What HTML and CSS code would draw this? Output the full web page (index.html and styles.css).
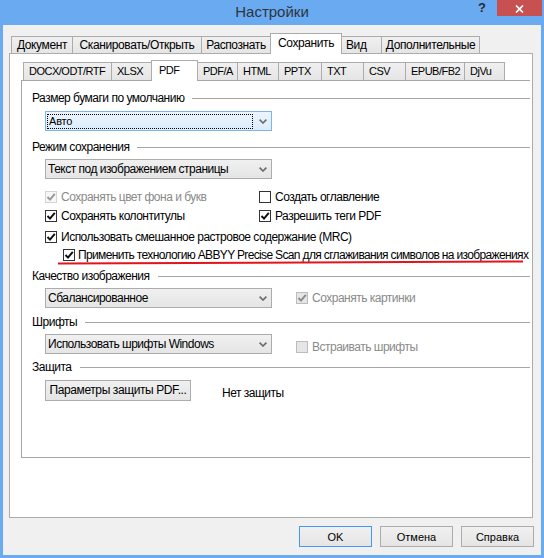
FILE: index.html
```html
<!DOCTYPE html>
<html lang="ru">
<head>
<meta charset="utf-8">
<title>Настройки</title>
<link rel="stylesheet" href="styles.css">
</head>
<body>
<div class="window">
  <header class="titlebar">
    <div class="title">Настройки</div>
    <div class="controls">
      <span class="help">?</span>
      <span class="close"><svg width="9" height="8" viewBox="0 0 9 8"><path d="M1 0.5 L8 7.5 M8 0.5 L1 7.5" stroke="#fff" stroke-width="1.7" fill="none"/></svg></span>
    </div>
  </header>
  <div class="client">
    <div class="tabrow outer">
      <div class="tab t-doc">Документ</div>
      <div class="tab t-scan">Сканировать/Открыть</div>
      <div class="tab t-rec">Распознать</div>
      <div class="tab t-save selected">Сохранить</div>
      <div class="tab t-view">Вид</div>
      <div class="tab t-adv">Дополнительные</div>
    </div>
    <div class="pane outer-pane">
      <div class="tabrow inner">
        <div class="itab i-docx">DOCX/ODT/RTF</div>
        <div class="itab i-xlsx">XLSX</div>
        <div class="itab i-pdf selected">PDF</div>
        <div class="itab i-pdfa">PDF/A</div>
        <div class="itab i-html">HTML</div>
        <div class="itab i-pptx">PPTX</div>
        <div class="itab i-txt">TXT</div>
        <div class="itab i-csv">CSV</div>
        <div class="itab i-epub">EPUB/FB2</div>
        <div class="itab i-djvu">DjVu</div>
      </div>
      <div class="pane inner-pane">
        <div class="group g1"><span>Размер бумаги по умолчанию</span><i class="rule"></i></div>
        <div class="row r-combo1">
          <div class="combo combo-focus">
            <span class="focus-rect">Авто</span>
            <svg class="chev" width="8" height="5" viewBox="0 0 8 5"><path d="M0.6 0.6 L4 4 L7.4 0.6" stroke="#6a6a6a" stroke-width="1.6" fill="none"/></svg>
          </div>
        </div>

        <div class="group g2"><span>Режим сохранения</span><i class="rule"></i></div>
        <div class="row r-combo2">
          <div class="combo">
            <span>Текст под изображением страницы</span>
            <svg class="chev" width="8" height="5" viewBox="0 0 8 5"><path d="M0.6 0.6 L4 4 L7.4 0.6" stroke="#6a6a6a" stroke-width="1.6" fill="none"/></svg>
          </div>
        </div>

        <div class="checks">
          <label class="check c1 disabled"><span class="box"><svg width="10" height="10" viewBox="0 0 10 10"><path d="M1.5 5 L4 7.6 L8.8 1.8" stroke="#9a9a9a" stroke-width="2" fill="none"/></svg></span>Сохранять цвет фона и букв</label>
          <label class="check c1b"><span class="box"></span>Создать оглавление</label>
          <label class="check c2"><span class="box"><svg width="10" height="10" viewBox="0 0 10 10"><path d="M1.5 5 L4 7.6 L8.8 1.8" stroke="#111" stroke-width="2" fill="none"/></svg></span>Сохранять колонтитулы</label>
          <label class="check c2b"><span class="box"><svg width="10" height="10" viewBox="0 0 10 10"><path d="M1.5 5 L4 7.6 L8.8 1.8" stroke="#111" stroke-width="2" fill="none"/></svg></span>Разрешить теги PDF</label>
          <label class="check c3 wide"><span class="box"><svg width="10" height="10" viewBox="0 0 10 10"><path d="M1.5 5 L4 7.6 L8.8 1.8" stroke="#111" stroke-width="2" fill="none"/></svg></span>Использовать смешанное растровое содержание (MRC)</label>
          <label class="check c4 wide indent"><span class="box"><svg width="10" height="10" viewBox="0 0 10 10"><path d="M1.5 5 L4 7.6 L8.8 1.8" stroke="#111" stroke-width="2" fill="none"/></svg></span>Применить технологию ABBYY Precise Scan для сглаживания символов на изображениях</label>
        </div>

        <div class="group g3"><span>Качество изображения</span><i class="rule"></i></div>
        <div class="row r-combo3">
          <div class="combo">
            <span>Сбалансированное</span>
            <svg class="chev" width="8" height="5" viewBox="0 0 8 5"><path d="M0.6 0.6 L4 4 L7.4 0.6" stroke="#6a6a6a" stroke-width="1.6" fill="none"/></svg>
          </div>
          <label class="check side disabled gray-box"><span class="box"><svg width="10" height="10" viewBox="0 0 10 10"><path d="M1.5 5 L4 7.6 L8.8 1.8" stroke="#8c8c8c" stroke-width="2" fill="none"/></svg></span>Сохранять картинки</label>
        </div>

        <div class="group g4"><span>Шрифты</span><i class="rule"></i></div>
        <div class="row r-combo4">
          <div class="combo">
            <span>Использовать шрифты Windows</span>
            <svg class="chev" width="8" height="5" viewBox="0 0 8 5"><path d="M0.6 0.6 L4 4 L7.4 0.6" stroke="#6a6a6a" stroke-width="1.6" fill="none"/></svg>
          </div>
          <label class="check side side-low disabled gray-box"><span class="box"></span>Встраивать шрифты</label>
        </div>

        <div class="group g5"><span>Защита</span><i class="rule"></i></div>
        <div class="row r-protect">
          <button class="btn btn-pdf" type="button">Параметры защиты PDF...</button>
          <span class="noprot">Нет защиты</span>
        </div>

        <svg class="annotation" width="468" height="7" viewBox="0 0 468 7"><path d="M1 4.6 Q 230 3.6 466 2.4" stroke="#e3141c" stroke-width="2" fill="none"/></svg>
      </div>
    </div>
    <div class="buttons">
      <button class="btn dlg default" type="button">OK</button>
      <button class="btn dlg" type="button">Отмена</button>
      <button class="btn dlg" type="button">Справка</button>
    </div>
  </div>
</div>
</body>
</html>
```

FILE: styles.css
```css
* { box-sizing: border-box; }

html, body {
  margin: 0;
  padding: 0;
}

body {
  width: 544px;
  height: 558px;
  overflow: hidden;
  background: #6aaaf1;
  font-family: "Liberation Sans", Arial, sans-serif;
  font-size: 12px;
  letter-spacing: -0.5px;
  color: #000;
}

.window {
  display: flex;
  flex-direction: column;
  height: 558px;
}

/* ---------- title bar ---------- */
.titlebar {
  height: 25px;
  flex: none;
  display: grid;
  grid-template-columns: 1fr auto 1fr;
  align-items: start;
}

.title {
  grid-column: 2;
  font-size: 15px;
  letter-spacing: 0;
  line-height: 24px;
  color: #2e3440;
}

.controls {
  grid-column: 3;
  justify-self: end;
  display: flex;
  margin-right: 2px;
}

.help {
  width: 30px;
  height: 16px;
  text-align: center;
  font-weight: bold;
  font-size: 13px;
  line-height: 15px;
  color: #2a2a2a;
  letter-spacing: 0;
}

.close {
  width: 45px;
  height: 16px;
  background: #c75050;
  display: flex;
  align-items: center;
  justify-content: center;
  padding-top: 1px;
}

/* ---------- client ---------- */
.client {
  flex: 1;
  margin: 0 3px 3px;
  background: #f0f0f0;
  padding: 8px 8px 0 6px;
  display: flex;
  flex-direction: column;
}

.pane {
  background: #fff;
  position: relative;
}

.tabrow {
  display: flex;
  align-items: flex-end;
  padding-left: 2px;
  position: relative;
  z-index: 1;
  margin-bottom: -1px;
  flex: none;
}

/* outer tabs */
.tabrow.outer { height: 21px; }

.tab {
  height: 17px;
  margin-bottom: 1px;
  border: 1px solid #acacac;
  border-bottom: none;
  background: linear-gradient(#f0f0f0, #e5e5e5);
  text-align: center;
  line-height: 16px;
  white-space: nowrap;
  letter-spacing: -0.4px;
}
.tab + .tab { margin-left: -1px; }

.tab.selected {
  height: 21px;
  margin-bottom: 0;
  background: #fff;
  line-height: 19px;
  position: relative;
  z-index: 2;
}

.t-doc { width: 62px; }
.t-scan { width: 130px; }
.t-rec { width: 70px; }
.t-save { width: 72px; }
.t-view { width: 41px; text-align: left; padding-left: 4px; }
.t-adv { width: 99px; }

.outer-pane {
  height: 465px;
  flex: none;
  border: 1px solid #acacac;
  padding: 6px 2px 0 11px;
  display: flex;
  flex-direction: column;
}

/* inner tabs */
.tabrow.inner { height: 21px; }

.itab {
  height: 18px;
  margin-bottom: 1px;
  border: 1px solid #acacac;
  border-bottom: none;
  background: linear-gradient(#f0f0f0, #e5e5e5);
  font-size: 11px;
  letter-spacing: -0.5px;
  line-height: 17px;
  padding-left: 5px;
  white-space: nowrap;
  overflow: hidden;
}
.itab + .itab { margin-left: -1px; }

.itab.selected {
  height: 21px;
  margin-bottom: 0;
  background: #fff;
  line-height: 19px;
  padding-left: 7px;
  position: relative;
  z-index: 2;
}

.i-docx { width: 89px; }
.i-xlsx { width: 41px; }
.i-pdf { width: 47px; }
.i-pdfa { width: 41px; }
.i-html { width: 42px; }
.i-pptx { width: 44px; }
.i-txt { width: 43px; }
.i-csv { width: 43px; }
.i-epub { width: 60px; }
.i-djvu { width: 41px; }

.inner-pane {
  height: 378px;
  flex: none;
  border: 1px solid #a5a5a5;
  border-right: none;
  padding: 9px 0 0 10px;
}

/* group headers */
.group {
  display: flex;
  align-items: center;
  height: 16px;
  line-height: 16px;
  white-space: nowrap;
}
.group .rule {
  flex: 1;
  height: 1px;
  background: #a5a5a5;
  margin-left: 8px;
}

.g2 { margin-top: 8px; }
.g3 { margin-top: 4px; }
.g4 { margin-top: 6px; }
.g5 { margin-top: 5px; }

.row {
  display: flex;
  align-items: center;
  padding-left: 13px;
}
.r-combo1 { margin-top: 5px; }
.r-combo2, .r-combo3, .r-combo4 { margin-top: 4px; }
.r-protect { margin-top: 5px; }

/* combobox */
.combo {
  width: 227px;
  height: 20px;
  border: 1px solid #acacac;
  background: linear-gradient(#f0f0f0, #e5e5e5);
  display: flex;
  align-items: center;
  justify-content: space-between;
  padding: 0 4px 0 2px;
  white-space: nowrap;
}
.chev { flex: none; }

.combo-focus {
  border-color: #7eb4ea;
  background: linear-gradient(#ecf4fc, #dcecfc);
  padding-left: 1px;
}
.focus-rect {
  width: 206px;
  height: 15px;
  border: 1px dotted #000;
  font-size: 11px;
  letter-spacing: -0.2px;
  line-height: 13px;
  padding-left: 1px;
}

/* checkboxes */
.checks {
  display: grid;
  grid-template-columns: 214px auto;
  padding-left: 13px;
  margin-top: 8px;
}

.check {
  display: flex;
  align-items: center;
  height: 19px;
  white-space: nowrap;
}
.check .box {
  width: 12px;
  height: 12px;
  flex: none;
  border: 1px solid #333;
  background: #fff;
  margin-right: 4px;
  display: flex;
  align-items: center;
  justify-content: center;
}

.check.wide { grid-column: 1 / span 2; }
.c3 { margin-top: 2px; }
.c4 { height: 18px; letter-spacing: -0.65px; }
.indent { padding-left: 18px; }
.indent .box { margin-right: 3px; }

.check.disabled { color: #8a8a8a; }
.check.disabled .box {
  border-color: #d4d4d4;
  background: #f7f7f7;
}
.check.gray-box .box {
  border-color: #bcbcbc;
  background: #e6e6e6;
}

.check.side { margin-left: 24px; }
.check.side-low { height: 14px; margin-top: 6px; }

/* buttons */
.btn {
  font-family: "Liberation Sans", Arial, sans-serif;
  font-size: 12px;
  letter-spacing: -0.4px;
  color: #000;
  border: 1px solid #acacac;
  background: linear-gradient(#f0f0f0, #e5e5e5);
  padding: 0;
  margin: 0;
}

.btn-pdf {
  width: 146px;
  height: 21px;
  line-height: 19px;
}

.noprot { margin-left: 31px; margin-top: 4px; }

.buttons {
  display: flex;
  justify-content: flex-end;
  gap: 8px;
  margin-top: 8px;
  margin-right: -1px;
}

.btn.dlg {
  width: 73px;
  height: 21px;
  font-size: 11px;
  letter-spacing: 0;
}
.btn.default { border-color: #3e9af2; }

/* hand-drawn red underline annotation */
.annotation {
  position: absolute;
  left: 35px;
  top: 178px;
}
```
